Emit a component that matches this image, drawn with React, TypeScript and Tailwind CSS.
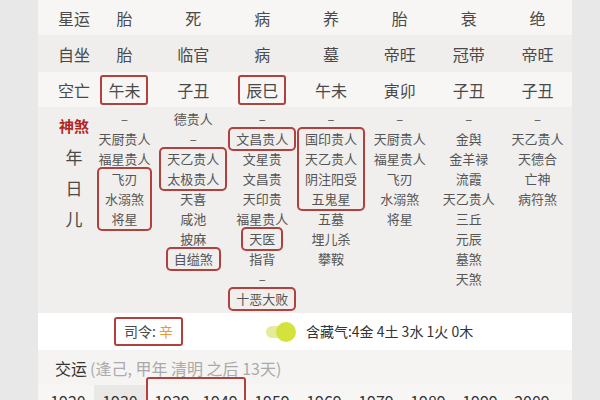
import React from "react";

type Cell = string | string[];

const topRows = [
  { label: "星运", values: ["胎", "死", "病", "养", "胎", "衰", "绝"], bg: "bg-[#f7f6f4]", h: "h-[35px]" },
  { label: "自坐", values: ["胎", "临官", "病", "墓", "帝旺", "冠带", "帝旺"], bg: "bg-[#efeeec]", h: "h-[37px]" },
  { label: "空亡", values: ["午未", "子丑", "辰巳", "午未", "寅卯", "子丑", "子丑"], bg: "bg-[#f7f6f4]", h: "h-[35px]" },
];

const boxedEmpty = [0, 2];

const shensha: Cell[][] = [
  ["–", "天厨贵人", "福星贵人", ["飞刃", "水溺煞", "将星"]],
  ["德贵人", "–", ["天乙贵人", "太极贵人"], "天喜", "咸池", "披麻", ["自缢煞"]],
  ["–", ["文昌贵人"], "文星贵", "文昌贵", "天印贵", "福星贵人", ["天医"], "指背", "–", ["十恶大败"]],
  ["–", ["国印贵人", "天乙贵人", "阴注阳受", "五鬼星"], "五墓", "埋儿杀", "攀鞍"],
  ["–", "天厨贵人", "福星贵人", "飞刃", "水溺煞", "将星"],
  ["–", "金舆", "金羊禄", "流霞", "天乙贵人", "三丘", "元辰", "墓煞", "天煞"],
  ["–", "天乙贵人", "天德合", "亡神", "病符煞"],
];

const years = ["1920", "1930", "1939", "1949", "1959", "1969", "1979", "1989", "1999", "2009"];

function RedBox({ children }: { children: React.ReactNode }) {
  return (
    <div className="flex flex-col items-center px-[6px] rounded-[3px] ring-2 ring-[#b0413c]">
      {children}
    </div>
  );
}

export default function App() {
  return (
    <div className="w-[600px] h-[400px] overflow-hidden bg-[#e8e8e8] font-['Noto_Sans_CJK_SC',sans-serif] text-[#4a4a4a]">
      <div className="ml-[38px] w-[534px]">
        {topRows.map((row, ri) => (
          <div
            key={row.label}
            className={`grid grid-cols-[52px_repeat(7,minmax(0,1fr))] items-center text-[16px] ${row.bg} ${row.h}`}
          >
            <div className="pl-[20px] text-center">{row.label}</div>
            {row.values.map((v, i) => (
              <div key={i} className="flex justify-center">
                {ri === 2 && boxedEmpty.includes(i) ? (
                  <span className="px-[6px] leading-[26px] rounded-[3px] border-2 border-[#b0413c]">{v}</span>
                ) : (
                  <span>{v}</span>
                )}
              </div>
            ))}
          </div>
        ))}

        {/* 神煞 */}
        <div className="grid grid-cols-[52px_repeat(7,minmax(0,1fr))] h-[206px] bg-[#f0efed] pt-[2px]">
          <div className="pl-[20px] text-center leading-[31px] pt-[1px]">
            <div className="text-[15px] font-bold text-[#b3261e]">神煞</div>
            <div className="text-[17px]">年</div>
            <div className="text-[17px]">日</div>
            <div className="text-[17px]">儿</div>
          </div>
          {shensha.map((col, ci) => (
            <div key={ci} className="flex flex-col items-center text-[13px] leading-[20px] text-[#555]">
              {col.map((c, i) =>
                Array.isArray(c) ? (
                  <RedBox key={i}>
                    {c.map((t) => (
                      <div key={t}>{t}</div>
                    ))}
                  </RedBox>
                ) : (
                  <div key={i}>{c}</div>
                )
              )}
            </div>
          ))}
        </div>

        {/* 司令 / 含藏气 */}
        <div className="flex items-center h-[37px] bg-white text-[14px]">
          <div className="ml-[76px] h-[29px] px-[8px] flex items-center rounded-[3px] border-2 border-[#b0413c]">
            <span>司令:</span>
            <span className="ml-[3px] text-[#e99a2c]">辛</span>
          </div>
          <div className="ml-[83px] relative w-[30px] h-[20px] flex items-center">
            <div className="w-[24px] h-[12px] rounded-full bg-[#e4ec9a]" />
            <div className="absolute right-0 top-0 w-[20px] h-[20px] rounded-full bg-[#d3e23c]" />
          </div>
          <div className="ml-[10px] text-[#333]">含藏气:4金 4土 3水 1火 0木</div>
        </div>

        {/* 交运 */}
        <div className="flex items-center h-[35px] bg-[#f5f4f2] pl-[17px] text-[16px]">
          <span className="text-[#333]">交运</span>
          <span className="ml-[3px] text-[#aaa]">(逢己, 甲年 清明 之后 13天)</span>
        </div>

        {/* years */}
        <div className="flex items-start h-[40px] bg-[#f7f6f4] px-[4px] text-[16px] leading-[20px] text-[#333]">
          <div className="w-[52px] pt-[6px] text-center">{years[0]}</div>
          <div className="w-[52px] h-full pt-[6px] text-center bg-[#e9e8e6]">{years[1]}</div>
          <div className="flex -mt-[8px] h-[56px] pt-[12px] rounded-[3px] border-2 border-[#b0413c]">
            <div className="w-[48px] text-center">{years[2]}</div>
            <div className="w-[48px] text-center">{years[3]}</div>
          </div>
          {years.slice(4).map((y) => (
            <div key={y} className="w-[52px] pt-[6px] text-center">
              {y}
            </div>
          ))}
        </div>
      </div>
    </div>
  );
}
